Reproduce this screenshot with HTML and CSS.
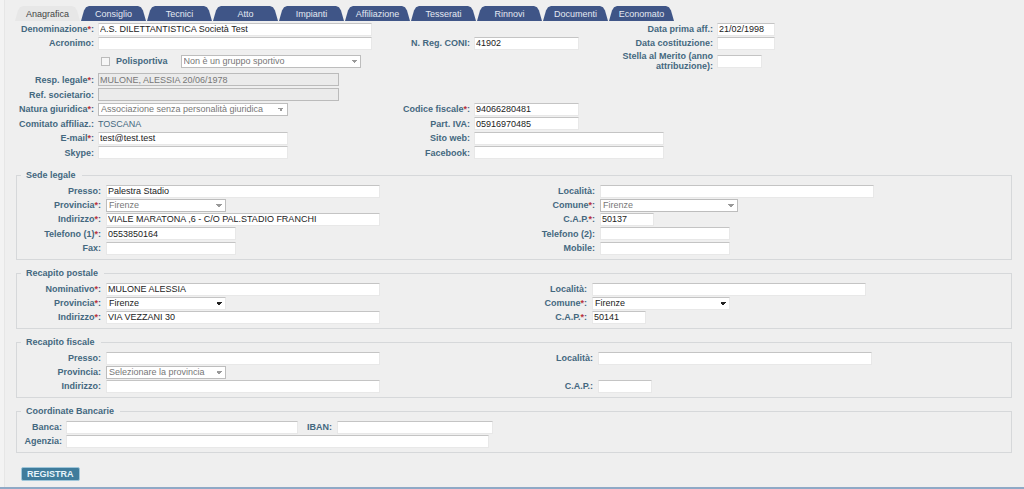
FILE: index.html
```
<!DOCTYPE html>
<html lang="it">
<head>
<meta charset="utf-8">
<title>Anagrafica</title>
<link rel="stylesheet" href="styles.css">
</head>
<body>
<nav class="tabs">
  <a class="tab active" href="#anagrafica">Anagrafica</a>
  <a class="tab" href="#consiglio">Consiglio</a>
  <a class="tab" href="#tecnici">Tecnici</a>
  <a class="tab" href="#atto">Atto</a>
  <a class="tab" href="#impianti">Impianti</a>
  <a class="tab" href="#affiliazione">Affiliazione</a>
  <a class="tab" href="#tesserati">Tesserati</a>
  <a class="tab" href="#rinnovi">Rinnovi</a>
  <a class="tab" href="#documenti">Documenti</a>
  <a class="tab" href="#economato">Economato</a>
</nav>
<form class="form">
  <div class="main-grid">
    <label class="c1" for="den">Denominazione<i>*</i>:</label><input class="w-l" id="den" type="text" value="A.S. DILETTANTISTICA Società Test">
    <label class="c5" for="dpa">Data prima aff.:</label><input class="w-date" id="dpa" type="text" value="21/02/1998">

    <label class="c1" for="acr">Acronimo:</label><input class="w-l" id="acr" type="text">
    <label class="c3" for="coni">N. Reg. CONI:</label><input class="w-code" id="coni" type="text" value="41902">
    <label class="c5" for="dco">Data costituzione:</label><input class="w-date" id="dco" type="text">

    <div class="c2 sport">
      <input class="tick" id="poli" type="checkbox" disabled><label for="poli">Polisportiva</label>
      <select class="w-sport" aria-label="Gruppo sportivo" disabled><option>Non è un gruppo sportivo</option></select>
    </div>
    <label class="c5" for="stella">Stella al Merito (anno attribuzione):</label><input class="w-year" id="stella" type="text">

    <label class="c1" for="resp">Resp. legale<i>*</i>:</label><input class="w-resp" id="resp" type="text" value="MULONE, ALESSIA 20/06/1978" disabled>
    <label class="c1" for="ref">Ref. societario:</label><input class="w-resp" id="ref" type="text" disabled>

    <label class="c1" for="nat">Natura giuridica<i>*</i>:</label><select class="w-m" id="nat" disabled><option>Associazione senza personalità giuridica</option></select>
    <label class="c3" for="cf">Codice fiscale<i>*</i>:</label><input class="w-code" id="cf" type="text" value="94066280481">

    <label class="c1" for="com">Comitato affiliaz.:</label><output id="com">TOSCANA</output>
    <label class="c3" for="iva">Part. IVA:</label><input class="w-code" id="iva" type="text" value="05916970485">

    <label class="c1" for="mail">E-mail<i>*</i>:</label><input class="w-m" id="mail" type="text" value="test@test.test">
    <label class="c3" for="web">Sito web:</label><input class="w-m wide" id="web" type="text">

    <label class="c1" for="sky">Skype:</label><input class="w-m" id="sky" type="text">
    <label class="c3" for="fb">Facebook:</label><input class="w-m wide" id="fb" type="text">
  </div>

  <fieldset>
    <legend>Sede legale</legend>
    <div class="pair legal">
      <label class="c1" for="s1">Presso:</label><input class="w-l" id="s1" type="text" value="Palestra Stadio">
      <label class="c3" for="s2">Località:</label><input class="w-l" id="s2" type="text">
      <label class="c1" for="s3">Provincia<i>*</i>:</label><select class="w-prov" id="s3" disabled><option>Firenze</option></select>
      <label class="c3" for="s4">Comune<i>*</i>:</label><select class="w-com" id="s4" disabled><option>Firenze</option></select>
      <label class="c1" for="s5">Indirizzo<i>*</i>:</label><input class="w-l" id="s5" type="text" value="VIALE MARATONA ,6 - C/O PAL.STADIO FRANCHI">
      <label class="c3" for="s6">C.A.P.<i>*</i>:</label><input class="w-cap" id="s6" type="text" value="50137">
      <label class="c1" for="s7">Telefono (1)<i>*</i>:</label><input class="w-tel" id="s7" type="text" value="0553850164">
      <label class="c3" for="s8">Telefono (2):</label><input class="w-tel" id="s8" type="text">
      <label class="c1" for="s9">Fax:</label><input class="w-tel" id="s9" type="text">
      <label class="c3" for="s10">Mobile:</label><input class="w-tel" id="s10" type="text">
    </div>
  </fieldset>

  <fieldset>
    <legend>Recapito postale</legend>
    <div class="pair postal">
      <label class="c1" for="p1">Nominativo<i>*</i>:</label><input class="w-l" id="p1" type="text" value="MULONE ALESSIA">
      <label class="c3" for="p2">Località:</label><input class="w-l" id="p2" type="text">
      <label class="c1" for="p3">Provincia<i>*</i>:</label><select class="w-prov" id="p3"><option>Firenze</option></select>
      <label class="c3" for="p4">Comune<i>*</i>:</label><select class="w-com" id="p4"><option>Firenze</option></select>
      <label class="c1" for="p5">Indirizzo<i>*</i>:</label><input class="w-l" id="p5" type="text" value="VIA VEZZANI 30">
      <label class="c3" for="p6">C.A.P.<i>*</i>:</label><input class="w-cap" id="p6" type="text" value="50141">
    </div>
  </fieldset>

  <fieldset>
    <legend>Recapito fiscale</legend>
    <div class="pair fiscal">
      <label class="c1" for="f1">Presso:</label><input class="w-l" id="f1" type="text">
      <label class="c3" for="f2">Località:</label><input class="w-l" id="f2" type="text">
      <label class="c1" for="f3">Provincia:</label><select class="w-prov" id="f3" disabled><option>Selezionare la provincia</option></select>
      <label class="c1" for="f4">Indirizzo:</label><input class="w-l" id="f4" type="text">
      <label class="c3" for="f5">C.A.P.:</label><input class="w-cap" id="f5" type="text">
    </div>
  </fieldset>

  <fieldset>
    <legend>Coordinate Bancarie</legend>
    <div class="bank">
      <label for="b1">Banca:</label>
      <div class="bank-row"><input class="w-bank" id="b1" type="text"><label for="b2">IBAN:</label><input class="w-iban" id="b2" type="text"></div>
      <label for="b3">Agenzia:</label><input class="w-agency" id="b3" type="text">
    </div>
  </fieldset>

  <button class="save" type="button">REGISTRA</button>
</form>
<footer class="edge"></footer>
</body>
</html>
```
FILE: styles.css
```
* { box-sizing: border-box; }
body {
  margin: 0;
  min-height: 100vh;
  display: flex;
  flex-direction: column;
  background: linear-gradient(90deg, #f3f3f3 4px, #e6e6e6 4px 5px, #efefef 5px);
  font: 9px/10px "Liberation Sans", Arial, sans-serif;
  color: #222;
}

/* Tabs */
.tabs { display: flex; gap: 1px; padding: 6px 0 0 15px; }
.tab {
  width: 65px;
  height: 15px;
  line-height: 16px;
  text-align: center;
  text-decoration: none;
  color: #e4e9f2;
  background: #3f5587;
  clip-path: polygon(0 100%, 3px 30%, 5px 8%, 8px 0, calc(100% - 8px) 0, calc(100% - 5px) 8%, calc(100% - 3px) 30%, 100% 100%);
}
.tab.active { background: #e7e7e7; color: #444; }

/* Form fields */
.form { flex: 1; padding-top: 1px; }
label, legend { font-weight: bold; color: #44687f; }
label { text-align: right; }
label i { font-style: normal; color: #b8323c; }
input, select {
  width: 100%;
  height: 13px;
  margin: 0;
  padding: 0 1px;
  border: 1px solid #e8e8e8;
  border-top-color: #c4c4c4;
  border-radius: 0;
  background: #fff;
  font: inherit;
  color: #222;
}
input:disabled { background: #ebebeb; border-color: #bbb; color: #777; }
select {
  appearance: none;
  padding: 0 10px 0 2px;
  background: #fff conic-gradient(from -45deg at 50% 100%, #222 90deg, transparent 0) no-repeat right 3px center / 6px 3px;
}
select:disabled {
  border-color: #bdbdbd;
  color: #777;
  opacity: 1;
  background-image: conic-gradient(from -45deg at 50% 100%, #999 90deg, transparent 0);
}

.main-grid, .pair, .bank { display: grid; align-items: center; column-gap: 4px; }
.main-grid {
  grid-template-columns: 94px 278fr 90px 138fr 97px 307fr;
  grid-template-rows: 14px 14px 22px 15px 15px 14px 15px 14px 15px;
}
.main-grid .wide { grid-column: 4 / 7; }
.c1 { grid-column: 1; }
.c2 { grid-column: 2; }
.c3 { grid-column: 3; }
.c5 { grid-column: 5; }
.sport { display: flex; align-items: center; }
.sport label { margin: 0 13px 0 6px; }
input.tick {
  appearance: none;
  width: 9px;
  height: 9px;
  margin-left: 3px;
  padding: 0;
  background: #f6f6f6;
}
output { color: #44687f; }

.w-l { max-width: 274px; }
.w-m { max-width: 190px; }
.w-resp { max-width: 241px; }
.w-sport { width: 180px; }
.w-code { max-width: 105px; }
.w-date { max-width: 58px; }
.w-year { max-width: 45px; }
.w-prov { max-width: 120px; }
.w-com { max-width: 138px; }
.w-cap { max-width: 54px; }
.w-tel { max-width: 130px; }
.w-agency { max-width: 423px; }

/* Sections */
fieldset {
  min-width: 0;
  margin: 8px 12px 0 16px;
  padding: 4px 0;
  border: 1px solid #d6d8da;
}
.main-grid + fieldset { margin-top: 10px; }
legend { margin-left: 4px; padding: 0 6px 0 5px; }
.pair {
  grid-template-columns: 84px 394fr 90px 411fr;
  grid-auto-rows: 14px;
  column-gap: 5px;
}
.pair.legal { grid-template-rows: 14px 14px 14px 15px 14px; }
.pair.postal { grid-template-columns: 84px 386fr 90px 419fr; }
.pair.fiscal { grid-template-columns: 84px 392fr 90px 413fr; }
.bank { grid-template-columns: 45px 1fr; grid-auto-rows: 14px; }
.bank-row { display: flex; align-items: center; }
.bank-row label { margin: 0 5px 0 9px; }
.w-bank { width: 232px; }
.w-iban { width: 156px; }

.save {
  display: block;
  height: 14px;
  margin: 14px 0 0 21px;
  padding: 0 5px;
  border: 1px solid #9fc6da;
  border-radius: 2px;
  background: #3f7c9c;
  color: #e6f3fa;
  font: bold 9px/12px "Liberation Sans", Arial, sans-serif;
}
.edge { height: 2px; background: #8fa9c6; }
```
